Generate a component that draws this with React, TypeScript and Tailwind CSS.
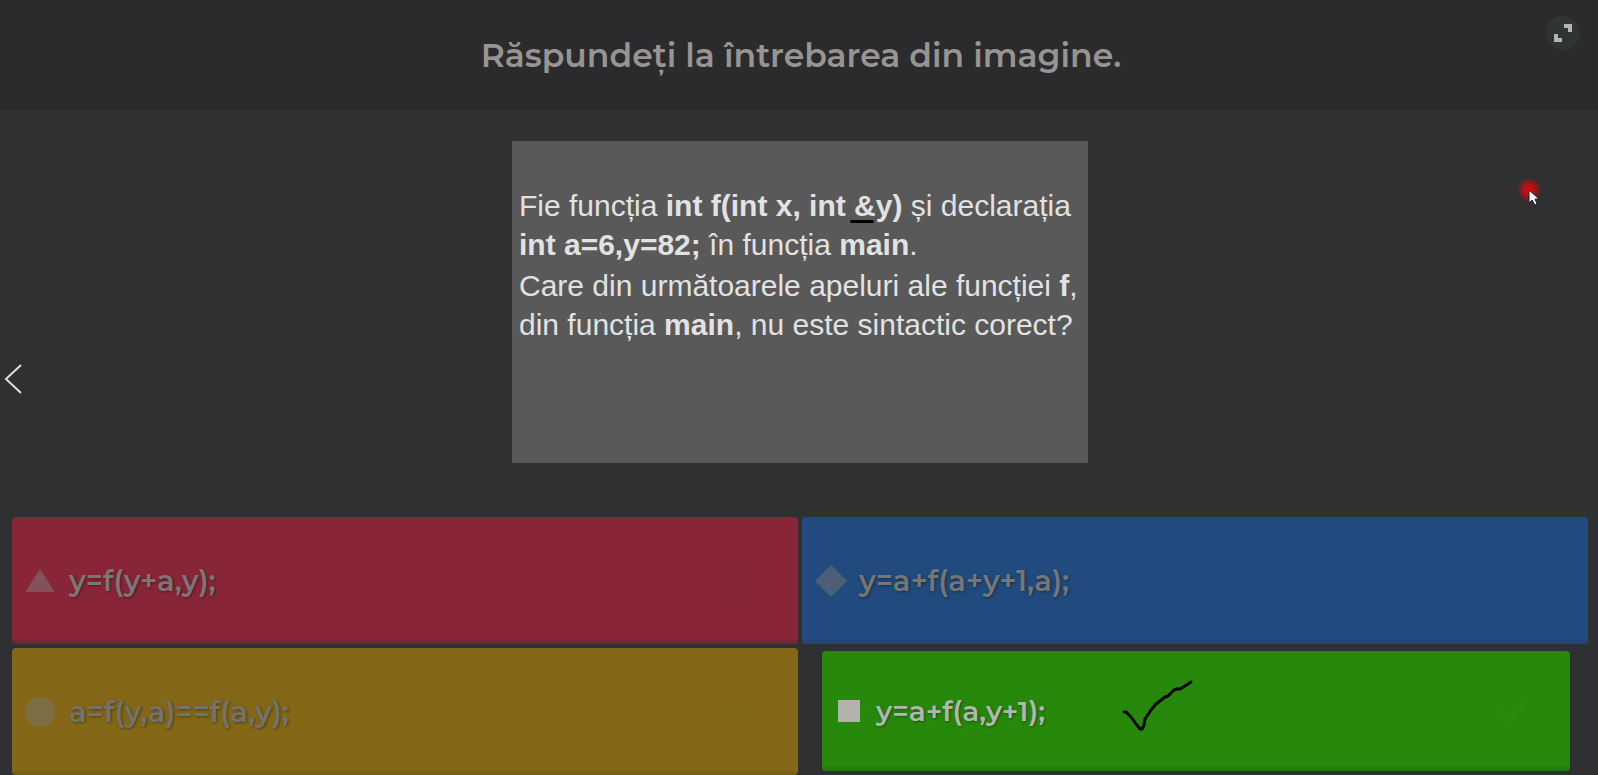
import type { ReactNode } from "react";

type AnswerProps = {
  text: string;
  shape: ReactNode;
  tone: string;
  textTone: string;
  children?: ReactNode;
};

const Cross = () => (
  <svg viewBox="0 0 36 36" className="h-9 w-9 fill-current" aria-hidden="true">
    <path d="M8 0l10 10L28 0l8 8-10 10 10 10-8 8-10-10L8 36l-8-8 10-10L0 8z" />
  </svg>
);

function Answer({ text, shape, tone, textTone, children }: AnswerProps) {
  return (
    <button
      type="button"
      className={`relative flex w-full items-center rounded border-b-4 pt-1 text-left ${tone}`}
    >
      {shape}
      <span
        className={`flex-1 font-semibold [text-shadow:1px_1px_3px_rgba(0,0,0,0.4)] ${textTone}`}
      >
        {text}
      </span>
      {children}
    </button>
  );
}

export default function App() {
  return (
    <div className="relative flex min-h-screen flex-col bg-[#2e3032] font-['Montserrat','Inter',sans-serif]">
      <header className="relative flex h-[110px] items-center justify-center bg-[#2b2b2d] pl-1">
        <h1 className="text-[33px] leading-[44px] font-semibold text-[#979492]">
          Răspundeți la întrebarea din imagine.
        </h1>
        <button
          type="button"
          aria-label="Ecran complet"
          className="absolute top-4 right-[18px] flex h-[34px] w-[34px] items-center justify-center rounded-full bg-[#313435] text-[#b4b4b4]"
        >
          <svg viewBox="0 0 18 18" className="h-[18px] w-[18px] fill-current" aria-hidden="true">
            <path d="M10 0h8v8h-4V4h-4zM0 10h4v4h4v4H0z" />
          </svg>
        </button>
      </header>

      <main className="relative flex flex-1 items-start justify-center pt-[31px] pr-8 pb-8 pl-[34px]">
        <section className="min-h-[322px] w-[576px] bg-[#595959] px-[7px] pt-[45px] font-['Liberation_Sans',Arial,sans-serif] text-[30px] leading-[39px] whitespace-nowrap text-[#e2e2e2]">
          <p>
            Fie funcția{" "}
            <b>
              int f(int x, int{" "}
              <span className="relative">
                &amp;
                <span className="absolute -bottom-px -left-1 h-[3px] w-6 rounded-full bg-black" />
              </span>
              y)
            </b>{" "}
            și declarația
            <br />
            <b>int a=6,y=82;</b> în funcția <b>main</b>.
          </p>
          <p className="mt-[2px]">
            Care din următoarele apeluri ale funcției <b>f</b>,
            <br />
            din funcția <b>main</b>, nu este sintactic corect?
          </p>
        </section>

        <svg
          viewBox="0 0 56 56"
          className="pointer-events-none absolute top-[52px] right-[41px] h-14 w-14"
          aria-hidden="true"
        >
          <defs>
            <radialGradient id="pointer-glow">
              <stop offset="0" stopColor="#cf0d0d" />
              <stop offset="0.4" stopColor="#b51114" />
              <stop offset="0.7" stopColor="#7a1d20" stopOpacity="0.75" />
              <stop offset="1" stopColor="#2e3032" stopOpacity="0" />
            </radialGradient>
          </defs>
          <circle cx="28" cy="28" r="14" fill="url(#pointer-glow)" />
          <path
            d="M28 28v13l3-3 3 5 2-1-2-5h4z"
            fill="#fff"
            stroke="#222"
            strokeWidth="1"
          />
        </svg>
      </main>

      <button
        type="button"
        aria-label="Înapoi"
        className="absolute top-[359px] left-1 flex h-10 w-5 items-center justify-center text-[#dedede]"
      >
        <svg viewBox="0 0 20 40" className="h-10 w-5" fill="none" stroke="currentColor" strokeWidth="2" aria-hidden="true">
          <path d="M17 6L2 20l15 14" />
        </svg>
      </button>

      <footer className="grid auto-rows-[127px] grid-cols-2 gap-1 pr-[10px] pl-3">
        <Answer
          text="y=f(y+a,y);"
          tone="border-[#7b2534] bg-[#882637] px-[13px]"
          textTone="pl-[14px] text-[29px] text-[#7c7674]"
          shape={
            <svg viewBox="0 0 30 30" className="h-[30px] w-[30px] fill-[#83505b]" aria-hidden="true">
              <path d="M15 3l15 23H0z" />
            </svg>
          }
        >
          <span className="mr-7 text-[#862536]">
            <Cross />
          </span>
        </Answer>
        <Answer
          text="y=a+f(a+y+1,a);"
          tone="border-[#254672] bg-[#214b7e] px-[13px]"
          textTone="pl-3 text-[29px] text-[#767676]"
          shape={
            <svg viewBox="0 0 32 32" className="h-8 w-8 fill-[#4a6078]" aria-hidden="true">
              <path d="M16 0l16 16-16 16L0 16z" />
            </svg>
          }
        >
          <span className="mr-7 text-[#224c7f]">
            <Cross />
          </span>
        </Answer>
        <Answer
          text="a=f(y,a)==f(a,y);"
          tone="border-[#785f19] bg-[#846817] px-[13px]"
          textTone="pl-[14px] text-[29px] text-[#74726c]"
          shape={
            <svg viewBox="0 0 30 30" className="h-[30px] w-[30px] fill-[#7c6f45]" aria-hidden="true">
              <circle cx="15" cy="15" r="15" />
            </svg>
          }
        >
          <span className="mr-7 text-[#826716]">
            <Cross />
          </span>
        </Answer>
        <div className="flex pt-[3px] pr-[18px] pb-1 pl-5">
          <Answer
            text="y=a+f(a,y+1);"
            tone="border-[#267c12] bg-[#27890c] px-4"
            textTone="pl-4 text-[28px] text-[#b4b5ae]"
            shape={
              <svg viewBox="0 0 22 22" className="h-[22px] w-[22px] fill-[#b1b1ae]" aria-hidden="true">
                <path d="M0 0h22v22H0z" />
              </svg>
            }
          >
            <svg viewBox="0 0 36 32" className="mr-6 h-8 w-9 fill-[#288a0d]" aria-hidden="true">
              <path d="M6 12l8 8L28 0l8 6-20 26L0 18z" />
            </svg>
            <svg
              viewBox="0 0 72 52"
              className="pointer-events-none absolute top-[28px] left-[300px] h-[52px] w-[72px]"
              fill="none"
              stroke="#000"
              strokeWidth="3"
              strokeLinecap="round"
              strokeLinejoin="round"
              aria-hidden="true"
            >
              <path d="M2 33h2l5 5 5 7 4 5h2l2-4 1-6 6-9 5-6 9-7 3-1 6-6 3-1h3l8-5 3-2" />
            </svg>
          </Answer>
        </div>
      </footer>
    </div>
  );
}
